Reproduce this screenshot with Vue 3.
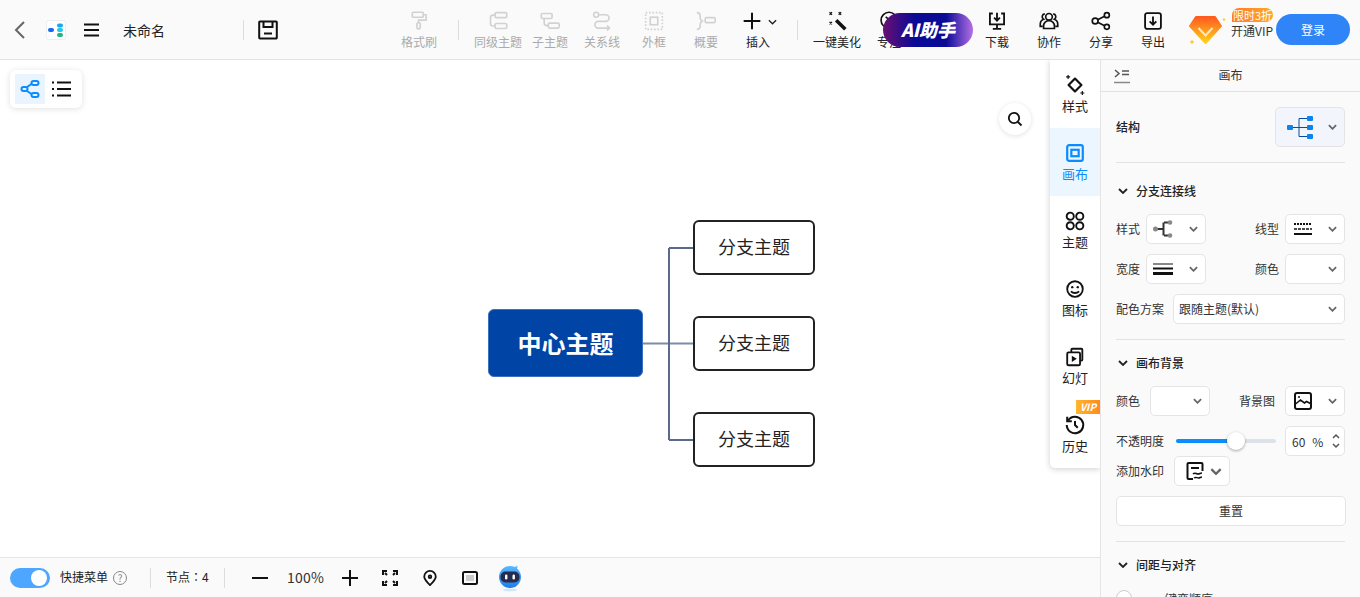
<template>
  <div class="app">
    <header class="topbar">
      <div class="left">
        <svg class="back" viewBox="0 0 14 20"><path d="M11 2 3 10l8 8" /></svg>
        <svg class="logo" viewBox="0 0 20 20">
          <rect x="0.5" y="0.5" width="19" height="19" rx="2" fill="#fff" stroke="#eee" />
          <rect x="2" y="8" width="6" height="4" rx="2" fill="#1668f0" />
          <rect x="11" y="3.500" width="6" height="4" rx="2" fill="#18a6f5" />
          <rect x="11" y="8" width="6" height="4" rx="2" fill="#22c8ea" />
          <rect x="11" y="13" width="6" height="4" rx="2" fill="#1fb87c" />
        </svg>
        <svg class="menu" viewBox="0 0 16 14"><path d="M0 1.500h15M0 7h15M0 12.500h15" /></svg>
        <span class="file-name">未命名</span>
        <i class="vline name-line"></i>
        <svg class="save" viewBox="0 0 20 20">
          <path d="M2 1.500h16a.8.8 0 0 1 .8.8v15.400a.8.8 0 0 1-.8.8H2a.8.8 0 0 1-.8-.8V2.300a.8.8 0 0 1 .8-.8Z" />
          <path d="M5.500 2v5h9V2M6 13.500h8" />
        </svg>
      </div>

      <div class="tools">
        <template v-for="tool in tools" :key="tool.label">
          <i v-if="tool.line" class="vline tool-line"></i>
          <div class="tool" :class="{ off: tool.off, pushed: tool.pushed }">
            <span class="tool-icon" :class="{ more: tool.more }">
              <svg viewBox="0 0 24 24" v-html="icons[tool.icon]"></svg>
              <svg v-if="tool.more" class="tool-more" viewBox="0 0 10 6"><path d="m1 1 4 4 4-4" /></svg>
            </span>
            <span class="tool-label">{{ tool.label }}</span>
          </div>
        </template>
      </div>

      <div class="ai-pill">AI助手</div>

      <div class="vip">
        <svg class="gem" viewBox="0 0 38 32">
          <defs>
            <linearGradient id="gemFill" x1="0" y1="0" x2="0" y2="1">
              <stop offset="0" stop-color="#ff5a1f" />
              <stop offset="1" stop-color="#ffd21f" />
            </linearGradient>
          </defs>
          <path d="M8 3h19l6 9-15.500 17L2 12Z" fill="url(#gemFill)" stroke="url(#gemFill)" stroke-width="2" stroke-linejoin="round" />
          <path d="m10.500 14 7 7.500 7-7.500" fill="none" stroke="#ffe9b8" stroke-width="2" />
          <path d="m4 26 2 2-2 2-2-2ZM36 4l1.500 1.500L36 7l-1.500-1.500Z" fill="#ffc91f" />
        </svg>
        <div class="vip-text">
          <span class="vip-badge">限时3折</span>
          <span class="vip-open">开通VIP</span>
        </div>
      </div>
      <button class="login">登录</button>
    </header>

    <div class="body">
      <section class="canvas">
        <div class="view-switch">
          <span class="view-btn on">
            <svg viewBox="0 0 20 20" fill="none" stroke="#0a8cff" stroke-width="2">
              <rect x="1.500" y="8" width="6" height="4" rx="2" />
              <rect x="11.500" y="2" width="7" height="4" rx="2" />
              <rect x="11.500" y="14" width="7" height="4" rx="2" />
              <path d="m7 8 4.500-3M7 12l4.500 3" />
            </svg>
          </span>
          <span class="view-btn">
            <svg viewBox="0 0 20 20" fill="none" stroke="#111" stroke-width="2">
              <path d="M5 3.500h14M5 10h14M5 16.500h14" />
              <path d="M0 3.500h2M0 10h2M0 16.500h2" />
            </svg>
          </span>
        </div>

        <span class="search">
          <svg viewBox="0 0 16 16" fill="none" stroke="#111" stroke-width="1.800">
            <circle cx="7" cy="7" r="5.200" />
            <path d="m11 11 3.500 3.500" />
          </svg>
        </span>

        <svg class="links" width="1100" height="497">
          <path class="mid" d="M643 283.500h50" />
          <path d="M669 188v192M669 188h24M669 380h24" />
        </svg>
        <div class="node root">中心主题</div>
        <div v-for="top in branchTops" :key="top" class="node branch" :style="{ top: top + 'px' }">分支主题</div>

        <nav class="rail">
          <div v-for="item in railItems" :key="item.label" class="rail-item" :class="{ on: item.on }">
            <span v-if="item.vip" class="vip-tag">VIP</span>
            <svg viewBox="0 0 24 24" v-html="icons[item.icon]"></svg>
            <span>{{ item.label }}</span>
          </div>
        </nav>

        <footer class="statusbar">
          <span class="switch"><i></i></span>
          <span class="quick">快捷菜单</span>
          <span class="help">?</span>
          <i class="vline first"></i>
          <span class="count">节点：4</span>
          <i class="vline"></i>
          <svg class="st minus" viewBox="0 0 16 16"><path d="M0 8h16" /></svg>
          <span class="zoom-val">100%</span>
          <svg class="st" viewBox="0 0 16 16"><path d="M0 8h16M8 0v16" /></svg>
          <svg class="st gap-a" viewBox="0 0 16 16">
            <path d="M1 5V1h4M11 1h4v4M1 11v4h4M15 11v4h-4M5 5 3 3M11 5l2-2M5 11l-2 2M11 11l2 2" />
          </svg>
          <svg class="st gap-b" viewBox="0 0 16 18">
            <path d="M8 17c-4-4-6.500-6.500-6.500-9.500a6.500 6.500 0 0 1 13 0C14.500 10.500 12 13 8 17Z" stroke-linejoin="round" />
            <circle cx="8" cy="7.500" r="1.500" />
          </svg>
          <svg class="st gap-b" viewBox="0 0 16 16">
            <rect x="1" y="2" width="14" height="12" rx="1.500" />
            <rect x="4" y="5" width="8" height="6" fill="#ccc" stroke="none" />
          </svg>
          <svg class="bot" viewBox="0 0 24 28">
            <defs>
              <linearGradient id="botFill" x1="0" y1="0" x2="0" y2="1">
                <stop offset="0" stop-color="#58b8ff" />
                <stop offset="1" stop-color="#1f7de8" />
              </linearGradient>
            </defs>
            <ellipse cx="12" cy="26" rx="7" ry="1.500" fill="#cfe6fb" />
            <path d="M16 3c2 0 3-1 3-2 1 2 0 4-1 5Z" fill="#58b8ff" />
            <circle cx="12" cy="13" r="11" fill="url(#botFill)" />
            <rect x="2.500" y="7.500" width="19" height="11" rx="5" fill="#262c4f" />
            <rect x="7" y="10.500" width="2.400" height="5" rx="1.200" fill="#fff" />
            <rect x="14.500" y="10.500" width="2.400" height="5" rx="1.200" fill="#fff" />
          </svg>
        </footer>
      </section>

      <aside class="panel">
        <div class="panel-head">
          <svg class="collapse" viewBox="0 0 16 16">
            <path d="m1 2 4 3.500L1 9M8 3h7M8 6.500h7" stroke="#555" />
            <path d="M0 14.500h16" stroke="#888" />
          </svg>
          <span>画布</span>
        </div>
        <div class="panel-body">
          <div class="row struct">
            <b>结构</b>
            <div class="select struct-select">
              <svg viewBox="0 0 26 23" width="26" height="23" fill="none" stroke="#0a4aa0">
                <path d="M6 11.500h14M12 2.500v18M12 2.500h8M12 20.500h8" />
                <rect x="0" y="9" width="6" height="5" rx="1" fill="#0a84f0" stroke="none" />
                <rect x="20" y="0" width="6" height="5" rx="1" fill="#0a84f0" stroke="none" />
                <rect x="20" y="9" width="6" height="5" rx="1" fill="#0a84f0" stroke="none" />
                <rect x="20" y="18" width="6" height="5" rx="1" fill="#0a84f0" stroke="none" />
              </svg>
              <svg class="caret" viewBox="0 0 10 6"><path d="m1 1 4 4 4-4" /></svg>
            </div>
          </div>
          <hr />

          <div class="section"><svg viewBox="0 0 10 6"><path d="m1 1 4 4 4-4" /></svg>分支连接线</div>
          <div class="row pair">
            <div class="field">
              <label class="w30">样式</label>
              <div class="select small">
                <svg viewBox="0 0 20 18" width="20" height="18" fill="none">
                  <path d="M4 9h7M11 2.500h4M11 15.500h4M10.500 2.500v13" stroke-width="2" stroke="#333" />
                  <circle cx="2.500" cy="9" r="2.500" fill="#888" />
                  <circle cx="17" cy="2.500" r="2.300" fill="#888" />
                  <circle cx="17" cy="15.500" r="2.300" fill="#888" />
                </svg>
                <svg class="caret" viewBox="0 0 10 6"><path d="m1 1 4 4 4-4" /></svg>
              </div>
            </div>
            <div class="field">
              <label>线型</label>
              <div class="select small line-select">
                <svg viewBox="0 0 18 12" width="18" height="12" fill="none" stroke="#111">
                  <path d="M0 1h18" stroke-dasharray="2 1" stroke-width="2" />
                  <path d="M0 6h18" stroke-dasharray="3 1" stroke-width="1.500" />
                  <path d="M0 11h18" stroke-width="2" />
                </svg>
                <svg class="caret" viewBox="0 0 10 6"><path d="m1 1 4 4 4-4" /></svg>
              </div>
            </div>
          </div>
          <div class="row pair">
            <div class="field">
              <label class="w30">宽度</label>
              <div class="select small">
                <svg viewBox="0 0 20 12" width="20" height="12" fill="none" stroke="#111">
                  <path d="M0 1h20" />
                  <path d="M0 5.500h20" stroke-width="2" />
                  <path d="M0 10.500h20" stroke-width="3" />
                </svg>
                <svg class="caret" viewBox="0 0 10 6"><path d="m1 1 4 4 4-4" /></svg>
              </div>
            </div>
            <div class="field">
              <label>颜色</label>
              <div class="select small">
                <svg class="caret" viewBox="0 0 10 6"><path d="m1 1 4 4 4-4" /></svg>
              </div>
            </div>
          </div>
          <div class="row scheme">
            <label>配色方案</label>
            <div class="select wide">
              <span>跟随主题(默认)</span>
              <svg class="caret" viewBox="0 0 10 6"><path d="m1 1 4 4 4-4" /></svg>
            </div>
          </div>
          <hr />

          <div class="section tight"><svg viewBox="0 0 10 6"><path d="m1 1 4 4 4-4" /></svg>画布背景</div>
          <div class="row pair">
            <div class="field wide-gap">
              <label>颜色</label>
              <div class="select small">
                <svg class="caret" viewBox="0 0 10 6"><path d="m1 1 4 4 4-4" /></svg>
              </div>
            </div>
            <div class="field wide-gap">
              <label>背景图</label>
              <div class="select small line-select">
                <svg viewBox="0 0 18 18" width="18" height="18" fill="none" stroke="#111" stroke-width="2">
                  <rect x="1" y="1" width="16" height="16" rx="2" />
                  <path d="m1.500 12 5-4 4 3 2-1.500 4 2" stroke-width="1.600" />
                  <circle cx="5" cy="5" r="1" fill="#111" stroke="none" />
                </svg>
                <svg class="caret" viewBox="0 0 10 6"><path d="m1 1 4 4 4-4" /></svg>
              </div>
            </div>
          </div>
          <div class="row opacity">
            <label>不透明度</label>
            <div class="slider"><i class="fill" :style="{ width: opacity + '%' }"></i><i class="knob" :style="{ left: opacity + '%' }"></i></div>
            <div class="number">
              <span>{{ opacity }}</span><span class="pct">%</span>
              <svg viewBox="0 0 8 16"><path d="m1 5 3-3 3 3M1 11l3 3 3-3" /></svg>
            </div>
          </div>
          <div class="row mark">
            <label>添加水印</label>
            <div class="select mark-select">
              <svg viewBox="0 0 18 18" width="18" height="18" fill="none" stroke="#111" stroke-width="2">
                <path d="M7 17H2.500a1 1 0 0 1-1-1V2a1 1 0 0 1 1-1h13a1 1 0 0 1 1 1v7" />
                <path d="M5 6h8" />
                <path d="M7 12c2-2 3 0 5 0s2-1 4-1M8 16c2-1.500 3 0 4.500 0s2-1 3.500-1" stroke-width="1.500" />
              </svg>
              <svg class="caret" viewBox="0 0 10 6"><path d="m1 1 4 4 4-4" /></svg>
            </div>
          </div>
          <button class="reset">重置</button>
          <hr />

          <div class="section tight"><svg viewBox="0 0 10 6"><path d="m1 1 4 4 4-4" /></svg>间距与对齐</div>
          <div class="row even">
            <i class="radio"></i>
            <span>一键变顺序</span>
          </div>
        </div>
      </aside>
    </div>
  </div>
</template>

<script setup>
const opacity = 60
const branchTops = [160, 256, 352]

const icons = {
  brush: '<g fill="none" stroke="currentColor" stroke-width="2"><rect x="4" y="1.500" width="13" height="6" rx="1"/><path d="M17 4.500h3.500V11h-9v3"/><rect x="9.500" y="14" width="4" height="7.500" rx="2"/></g>',
  sibling: '<g fill="none" stroke="currentColor" stroke-width="2"><rect x="8.500" y="2" width="14" height="6" rx="1.500"/><rect x="8.500" y="15" width="14" height="6" rx="1.500"/><path d="M8.500 5H6a3 3 0 0 0-3 3v7a3 3 0 0 0 3 3h2.500"/></g>',
  child: '<g fill="none" stroke="currentColor" stroke-width="2"><rect x="1.500" y="3" width="13" height="6" rx="1.500"/><rect x="10" y="14.500" width="13" height="6" rx="1.500"/><path d="M5 9v5a3.500 3.500 0 0 0 3.500 3.500H10"/></g>',
  relation: '<g fill="none" stroke="currentColor" stroke-width="2"><circle cx="5" cy="4.500" r="3"/><path d="M8 4.500h8.500a4 4 0 0 1 0 8h-9a4 4 0 0 0 0 8H21"/><path d="m18 17.500 3 3-3 3"/></g>',
  frame: '<g fill="none" stroke="currentColor"><rect x="2" y="2" width="20" height="20" stroke-width="2" stroke-dasharray="2 2"/><rect x="7.500" y="7.500" width="9" height="9" stroke-width="2"/></g>',
  summary: '<g fill="none" stroke="currentColor" stroke-width="2"><path d="M1 2c3 0 4 1 4 4v2c0 2 1 3 2.500 4C6 13 5 14 5 16v2c0 3-1 4-4 4"/><rect x="11" y="8" width="12" height="6" rx="1.500"/></g>',
  plus: '<path d="M2 12h20M12 2v20" fill="none" stroke="currentColor" stroke-width="2.400"/>',
  wand: '<g fill="none" stroke="currentColor"><path d="m11 11 11 11" stroke-width="4.200"/><path d="M3 1.500 6 4.500M6 1.500 3 4.500M14 1.500l3 3M17 1.500l-3 3M3 13l3 3M6 13l-3 3" stroke-width="1.500"/></g>',
  compass: '<g fill="none" stroke="currentColor" stroke-width="2"><circle cx="12" cy="11" r="9.500"/><path d="m8 7 5 4 5-4"/></g>',
  download: '<g fill="none" stroke="currentColor" stroke-width="2.200"><path d="M7 3H3.500v13h17V3H17"/><path d="M12 2v9M8.500 8 12 11.500 15.500 8"/><path d="M12 16v5M7 21.500h10"/></g>',
  team: '<g fill="none" stroke="currentColor" stroke-width="2"><circle cx="12" cy="7" r="4"/><path d="M5.500 21v-3a6.500 6.500 0 0 1 13 0v3z"/><path d="M7 3.500a3.500 3.500 0 0 0-1.500 6.500C3 11 1.500 13 1.500 16v2.500h3M17 3.500a3.500 3.500 0 0 1 1.500 6.500c2.500 1 4 3 4 6v2.500h-3"/></g>',
  share: '<g fill="none" stroke="currentColor" stroke-width="2"><circle cx="5" cy="12" r="3.500"/><circle cx="19" cy="5" r="3"/><circle cx="19" cy="19" r="3"/><path d="m8 10.500 8.300-4.200M8 13.500l8.300 4.200"/></g>',
  export: '<g fill="none" stroke="currentColor" stroke-width="2.200"><rect x="2.500" y="2.500" width="19" height="19" rx="2.500"/><path d="M12 6.500V16M8 12.500l4 4 4-4"/></g>',
  style: '<g fill="none" stroke="currentColor"><path d="m12 5 7 7-7 7-7-7z" stroke-width="2.400" stroke-linejoin="round"/><path d="M4.500 1v4.500M2.300 3.200h4.400M20 18.500v4.500M17.800 20.700h4.400" stroke-width="1.300"/></g>',
  canvas: '<g fill="none" stroke="currentColor" stroke-width="2.400"><rect x="3.500" y="3.500" width="17" height="17" rx="2"/><rect x="8" y="8.500" width="8" height="7"/></g>',
  theme: '<g fill="none" stroke="currentColor" stroke-width="2.100"><circle cx="6.800" cy="6.800" r="3.900"/><circle cx="17.200" cy="6.800" r="3.900"/><circle cx="6.800" cy="17.200" r="3.900"/><circle cx="17.200" cy="17.200" r="3.900"/></g>',
  smile: '<g fill="none" stroke="currentColor" stroke-width="2"><circle cx="12" cy="12" r="8.500"/><path d="M7.500 14.500c2.500 2.500 6.500 2.500 9 0"/></g><circle cx="9" cy="10" r="1.300" fill="currentColor"/><circle cx="15" cy="10" r="1.300" fill="currentColor"/>',
  slides: '<g fill="none" stroke="currentColor" stroke-width="2"><path d="M8 6.500V4a1 1 0 0 1 1-1h10a1 1 0 0 1 1 1v11a1 1 0 0 1-1 1h-1"/><rect x="3.500" y="7" width="14" height="14" rx="1.500"/></g><path d="M8.500 10.500v7l5.500-3.500z" fill="currentColor"/>',
  history: '<g fill="none" stroke="currentColor" stroke-width="2.200"><path d="M4.500 7A9 9 0 1 1 3 12"/><path d="M3.500 3v5h5M12 7.500V12l3 3"/></g>'
}

const tools = [
  { label: '格式刷', icon: 'brush', off: true },
  { label: '同级主题', icon: 'sibling', off: true, line: true },
  { label: '子主题', icon: 'child', off: true },
  { label: '关系线', icon: 'relation', off: true },
  { label: '外框', icon: 'frame', off: true },
  { label: '概要', icon: 'summary', off: true },
  { label: '插入', icon: 'plus', more: true },
  { label: '一键美化', icon: 'wand', line: true },
  { label: '专注', icon: 'compass' },
  { label: '下载', icon: 'download', pushed: true },
  { label: '协作', icon: 'team' },
  { label: '分享', icon: 'share' },
  { label: '导出', icon: 'export' }
]

const railItems = [
  { label: '样式', icon: 'style' },
  { label: '画布', icon: 'canvas', on: true },
  { label: '主题', icon: 'theme' },
  { label: '图标', icon: 'smile' },
  { label: '幻灯', icon: 'slides' },
  { label: '历史', icon: 'history', vip: true }
]
</script>

<style>
html,
body {
  margin: 0;
  background: #fff;
}
</style>

<style scoped>
.app {
  width: 1360px;
  height: 597px;
  display: flex;
  flex-direction: column;
  overflow: hidden;
  position: relative;
  font-family: "Noto Sans CJK SC", "Noto Sans", sans-serif;
  font-size: 12px;
  color: #222;
}

/* top bar */
.topbar {
  flex: 0 0 60px;
  box-sizing: border-box;
  height: 60px;
  display: flex;
  align-items: center;
  background: #fafafa;
  border-bottom: 1px solid #e3e3e3;
  position: relative;
}

.left {
  width: 393px;
  flex: none;
  display: flex;
  align-items: center;
}

.back {
  width: 14px;
  height: 20px;
  margin-left: 13px;
  fill: none;
  stroke: #666;
  stroke-width: 2;
}

.logo {
  width: 20px;
  height: 20px;
  margin-left: 19px;
}

.menu {
  width: 16px;
  height: 14px;
  margin-left: 18px;
  fill: none;
  stroke: #111;
  stroke-width: 2;
}

.file-name {
  margin-left: 23px;
  width: 120px;
  font-size: 14px;
  color: #222;
}

.vline {
  display: block;
  width: 1px;
  height: 20px;
  background: #ddd;
}

.name-line {
  flex: none;
}

.save {
  width: 20px;
  height: 20px;
  margin-left: 14px;
  fill: none;
  stroke: #111;
  stroke-width: 2;
}

.tools {
  display: flex;
  align-items: center;
  flex: none;
}

.tool-line {
  margin: 0 13px;
}

.tool {
  width: 52px;
  display: flex;
  flex-direction: column;
  align-items: center;
  color: #111;
}

.tool.pushed {
  margin-left: 56px;
}

.tool.off {
  color: #d2d2d2;
}

.tool-icon {
  position: relative;
  width: 20px;
  height: 22px;
  display: flex;
  align-items: center;
  justify-content: center;
}

.tool-icon.more {
  margin-right: 12px;
}

.tool-icon > svg:first-child {
  width: 20px;
  height: 20px;
  flex: none;
}

.tool-more {
  position: absolute;
  left: 26px;
  top: 9px;
  width: 9px;
  height: 6px;
  fill: none;
  stroke: #222;
  stroke-width: 1.500;
}

.tool-label {
  margin-top: 2px;
  line-height: 16px;
  white-space: nowrap;
  color: #222;
}

.tool.off .tool-label {
  color: #aaa;
}

.ai-pill {
  position: absolute;
  left: 883px;
  top: 13px;
  width: 90px;
  height: 34px;
  border-radius: 17px;
  background: linear-gradient(90deg, #6a0f72 0%, #0a0a96 35%, #0a0a96 70%, #b46fe6 100%);
  color: #fff;
  font-size: 18px;
  font-weight: 900;
  font-style: italic;
  line-height: 33px;
  text-align: center;
}

.vip {
  display: flex;
  align-items: center;
  margin-left: 9px;
  width: 88px;
  flex: none;
}

.gem {
  width: 38px;
  height: 32px;
  flex: none;
}

.vip-text {
  margin-left: 5px;
  margin-bottom: 13px;
  display: flex;
  flex-direction: column;
  align-items: flex-start;
}

.vip-badge {
  height: 14px;
  width: 41px;
  border-radius: 7px 7px 7px 0;
  background: linear-gradient(90deg, #ff7a2e, #ffab1f);
  color: #fff;
  font-size: 11px;
  line-height: 14px;
  text-align: center;
  margin-left: 1px;
}

.vip-open {
  line-height: 16px;
  margin-top: 1px;
  white-space: nowrap;
  color: #333;
}

.login {
  width: 74px;
  height: 31px;
  border: 0;
  border-radius: 16px;
  background: #2f84f8;
  color: #fff;
  font-family: inherit;
  font-size: 12px;
  padding: 0;
  flex: none;
}

/* main area */
.body {
  flex: 1;
  min-height: 0;
  display: flex;
}

.canvas {
  position: relative;
  width: 1100px;
  background: #fff;
  overflow: hidden;
}

.view-switch {
  position: absolute;
  left: 10px;
  top: 10px;
  display: flex;
  padding: 4px 5px;
  gap: 2px;
  border-radius: 6px;
  background: #fff;
  box-shadow: 0 1px 6px rgba(0, 0, 0, 0.12);
}

.view-btn {
  width: 30px;
  height: 30px;
  display: flex;
  align-items: center;
  justify-content: center;
}

.view-btn.on {
  background: #e9f4ff;
}

.view-btn svg {
  width: 20px;
  height: 20px;
}

.search {
  position: absolute;
  left: 999px;
  top: 43px;
  width: 32px;
  height: 32px;
  border-radius: 50%;
  background: #fff;
  box-shadow: 0 1px 5px rgba(0, 0, 0, 0.12);
  display: flex;
  align-items: center;
  justify-content: center;
}

.search svg {
  width: 16px;
  height: 16px;
}

.links {
  position: absolute;
  left: 0;
  top: 0;
  fill: none;
  stroke: #5b6a8c;
  stroke-width: 2;
}

.links .mid {
  stroke: #7f8ba6;
}

.node {
  position: absolute;
  box-sizing: border-box;
  display: flex;
  align-items: center;
  justify-content: center;
}

.root {
  left: 488px;
  top: 249px;
  width: 155px;
  height: 68px;
  padding-bottom: 2px;
  border: 1px solid #3a70bd;
  border-radius: 6px;
  background: #0044a6;
  color: #fff;
  font-size: 24px;
  font-weight: 700;
}

.branch {
  left: 693px;
  width: 122px;
  height: 55px;
  padding-bottom: 3px;
  border: 2px solid #222;
  border-radius: 6px;
  background: #fff;
  font-size: 18px;
  color: #222;
}

.rail {
  position: absolute;
  left: 1050px;
  top: 0;
  width: 50px;
  background: #fff;
  border-radius: 0 0 0 5px;
  box-shadow: 0 1px 6px rgba(0, 0, 0, 0.2);
}

.rail-item {
  position: relative;
  height: 68px;
  display: flex;
  flex-direction: column;
  align-items: center;
  color: #111;
  font-size: 13px;
}

.rail-item svg {
  width: 22px;
  height: 22px;
  margin-top: 14px;
}

.rail-item span {
  line-height: 18px;
  margin-top: 1px;
  color: #222;
}

.rail-item.on {
  background: #ebf6ff;
  color: #0a8cff;
}

.rail-item.on span {
  color: #0a8cff;
}

.rail-item span.vip-tag {
  position: absolute;
  right: 0;
  top: 0;
  width: 24px;
  height: 14px;
  margin: 0;
  background: linear-gradient(90deg, #ffb52e, #ff8a1f);
  color: #fff;
  font-size: 10px;
  font-weight: 700;
  font-style: italic;
  line-height: 14px;
  text-align: center;
}

.statusbar {
  position: absolute;
  left: 0;
  right: 0;
  bottom: 0;
  box-sizing: border-box;
  height: 40px;
  display: flex;
  align-items: center;
  padding-left: 10px;
  background: #fafafa;
  border-top: 1px solid #e5e5e5;
}

.switch {
  width: 40px;
  height: 20px;
  border-radius: 10px;
  background: #4da6ff;
  position: relative;
  flex: none;
}

.switch i {
  position: absolute;
  right: 3px;
  top: 2px;
  width: 16px;
  height: 16px;
  border-radius: 50%;
  background: #fff;
}

.quick {
  margin-left: 10px;
  width: 48px;
  padding-bottom: 2px;
  white-space: nowrap;
}

.help {
  box-sizing: border-box;
  width: 14px;
  height: 14px;
  margin-left: 5px;
  border: 1px solid #888;
  border-radius: 50%;
  color: #888;
  font-size: 10px;
  line-height: 12px;
  text-align: center;
  flex: none;
}

.statusbar .vline {
  height: 20px;
  flex: none;
}

.statusbar .vline.first {
  margin-left: 23px;
}

.count {
  width: 44px;
  margin: 0 14px 0 15px;
  padding-bottom: 2px;
  font-family: "Noto Sans CJK TC", "Noto Sans", sans-serif;
  white-space: nowrap;
}

.st {
  width: 16px;
  height: 16px;
  flex: none;
  fill: none;
  stroke: #111;
  stroke-width: 2;
}

.minus {
  margin-left: 27px;
}

.zoom-val {
  width: 37px;
  margin: 0 18px 0 19px;
  padding-bottom: 2px;
  font-size: 14px;
  letter-spacing: 0.2px;
  white-space: nowrap;
  color: #333;
}

.gap-a {
  margin-left: 24px;
}

.gap-b {
  margin-left: 24px;
}

.bot {
  width: 24px;
  height: 28px;
  margin-left: 20px;
  flex: none;
}

/* right panel */
.panel {
  width: 260px;
  box-sizing: border-box;
  background: #fafafa;
  border-left: 1px solid #e5e5e5;
  overflow: hidden;
}

.panel-head {
  position: relative;
  height: 32px;
  box-sizing: border-box;
  border-bottom: 1px solid #e2e2e2;
  display: flex;
  align-items: center;
  justify-content: center;
  padding-bottom: 2px;
  color: #333;
}

.collapse {
  position: absolute;
  left: 13px;
  top: 8px;
  width: 16px;
  height: 16px;
  fill: none;
  stroke-width: 1.500;
}

.panel-body {
  padding: 0 15px;
}

.row {
  display: flex;
  align-items: center;
}

label {
  margin-bottom: 2px;
  white-space: nowrap;
  color: #333;
}

.select {
  box-sizing: border-box;
  height: 30px;
  display: flex;
  align-items: center;
  justify-content: space-between;
  background: #fff;
  border: 1px solid #e4e4e4;
  border-radius: 5px;
  padding: 0 7px 0 6px;
  flex: none;
}

.line-select {
  padding-left: 8px;
}

.caret {
  margin-left: auto;
  width: 9px;
  height: 6px;
  flex: none;
  fill: none;
  stroke: #666;
  stroke-width: 2;
}

.struct {
  margin-top: 15px;
  justify-content: space-between;
}

.struct b {
  margin-bottom: 2px;
  font-weight: 500;
}

.struct-select {
  width: 70px;
  height: 40px;
  background: #f2f6fc;
  padding-left: 11px;
}

hr {
  margin: 15px 0 0;
  height: 1px;
  border: 0;
  background: #e3e3e3;
}

.section {
  margin-top: 18px;
  height: 20px;
  display: flex;
  align-items: center;
  padding-bottom: 2px;
  box-sizing: border-box;
  font-weight: 500;
  color: #222;
}

.section.tight {
  margin-top: 13px;
}

.section svg {
  width: 10px;
  height: 6px;
  margin: 2px 8px 0 2px;
  fill: none;
  stroke: #222;
  stroke-width: 1.800;
}

.pair {
  margin-top: 10px;
  justify-content: space-between;
}

.section + .pair {
  margin-top: 13px;
}

.field {
  display: flex;
  align-items: center;
  gap: 6px;
}

.field.wide-gap {
  gap: 10px;
}

.w30 {
  width: 24px;
}

.small {
  width: 60px;
}

.scheme {
  margin-top: 10px;
  justify-content: space-between;
}

.wide {
  width: 172px;
  padding-left: 5px;
  padding-bottom: 2px;
  color: #333;
}

.wide .caret {
  margin-top: 2px;
}

.opacity {
  margin-top: 10px;
}

.slider {
  position: relative;
  width: 100px;
  height: 4px;
  margin-left: 12px;
  border-radius: 2px;
  background: #dde1e8;
  flex: none;
}

.slider .fill {
  position: absolute;
  left: 0;
  top: 0;
  height: 4px;
  border-radius: 2px;
  background: #0a8cff;
}

.slider .knob {
  position: absolute;
  top: -7px;
  width: 18px;
  height: 18px;
  margin-left: -9px;
  border-radius: 50%;
  background: #fff;
  box-shadow: 0 1px 3px rgba(0, 0, 0, 0.35);
}

.number {
  box-sizing: border-box;
  position: relative;
  width: 60px;
  height: 30px;
  margin-left: auto;
  background: #fff;
  border: 1px solid #e4e4e4;
  border-radius: 5px;
  display: flex;
  align-items: center;
  padding-left: 6px;
  color: #333;
}

.number .pct {
  margin-left: 7px;
}

.number svg {
  position: absolute;
  right: 4px;
  top: 6px;
  width: 8px;
  height: 16px;
  fill: none;
  stroke: #555;
  stroke-width: 1.500;
}

.mark label {
  margin-right: 10px;
}

.mark-select {
  width: 56px;
  padding-left: 11px;
}

.mark-select .caret {
  width: 12px;
  height: 7px;
}

.reset {
  display: block;
  box-sizing: border-box;
  width: 230px;
  height: 30px;
  margin-top: 10px;
  padding: 0 0 2px;
  background: #fff;
  border: 1px solid #e4e4e4;
  border-radius: 5px;
  font-family: inherit;
  font-size: 12px;
  color: #333;
}

.even {
  margin-top: 13px;
  height: 20px;
  color: #333;
}

.radio {
  display: block;
  box-sizing: border-box;
  width: 16px;
  height: 16px;
  border: 1px solid #ccc;
  border-radius: 50%;
  background: #fff;
  margin-right: 21px;
}
</style>
